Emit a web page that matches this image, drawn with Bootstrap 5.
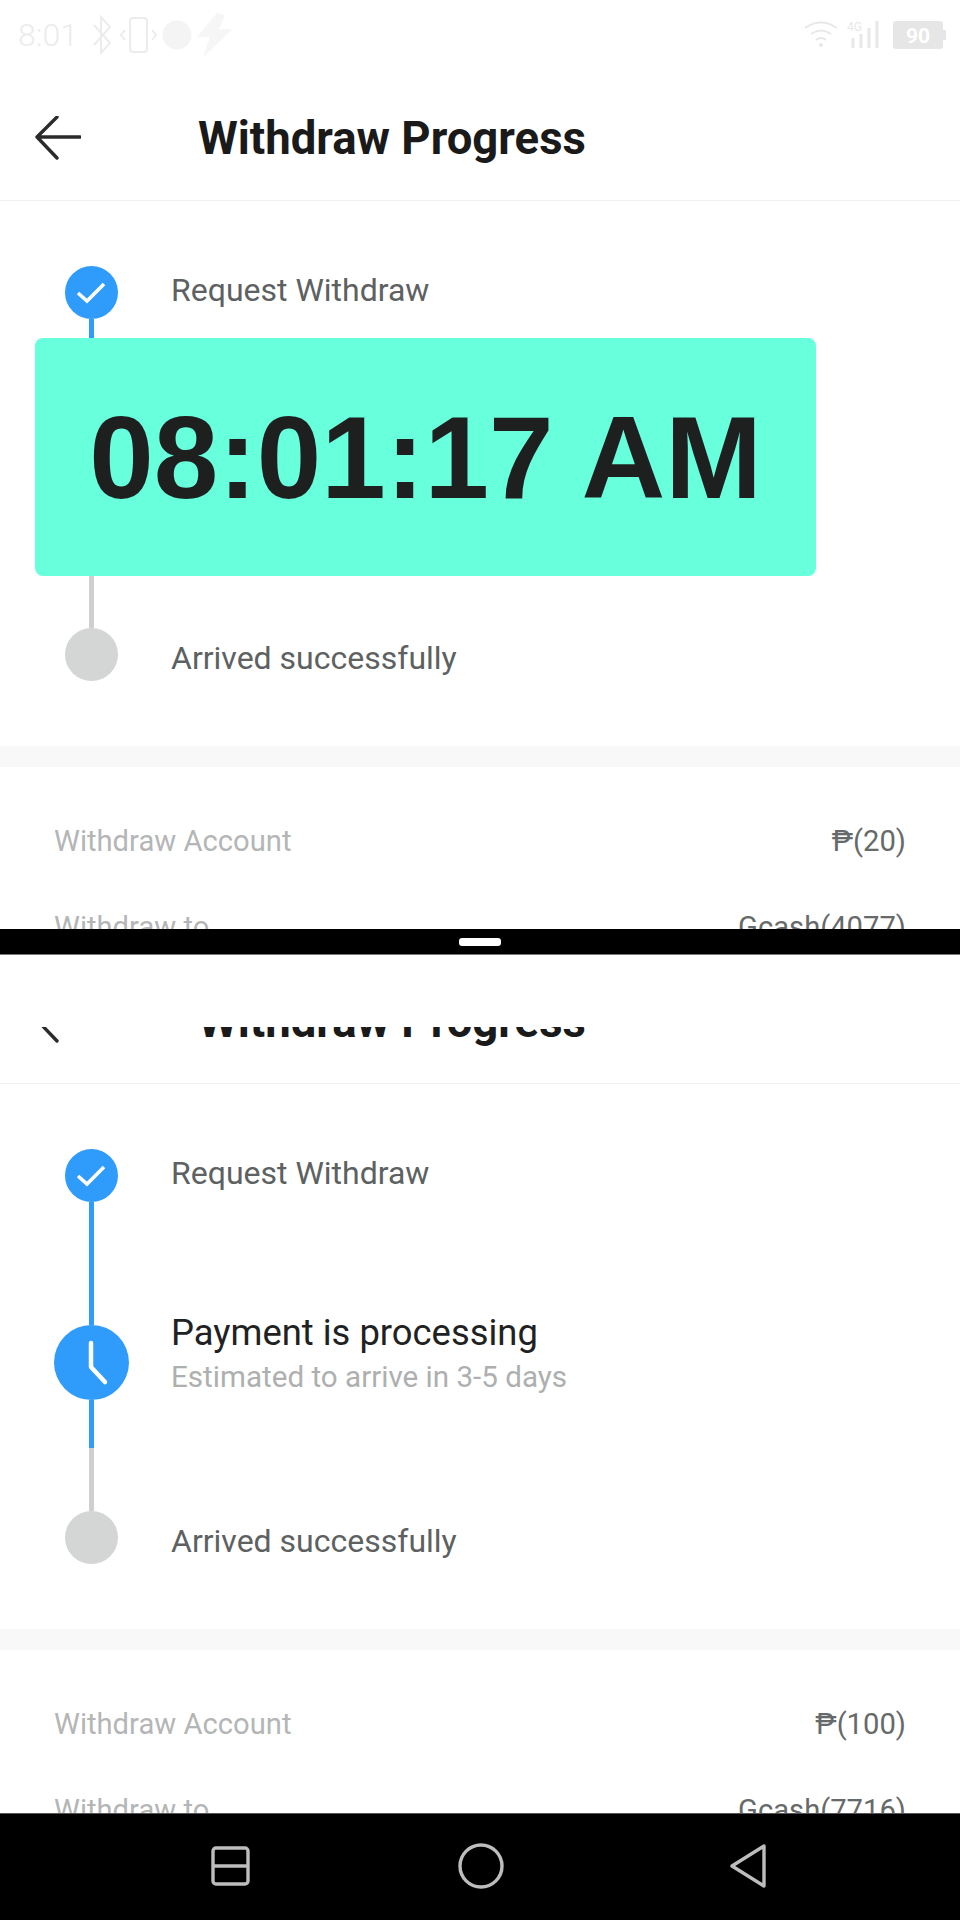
<!DOCTYPE html>
<html lang="en">
<head>
  <meta charset="UTF-8">
  <meta name="viewport" content="width=device-width, initial-scale=1.0">
  <link href="https://cdn.jsdelivr.net/npm/bootstrap@5.3.0/dist/css/bootstrap.min.css" rel="stylesheet">
  <title>Withdraw Progress</title>
  <style>
    body {
      width: 960px;
      height: 1920px;
      background-color: #000;
      font-family: Roboto, "Liberation Sans", sans-serif;
      overflow: hidden;
    }

    .pane-top { height: 929px; }
    .pane-bottom { height: 858px; }

    .status-strip {
      height: 75px;
      padding: 0 13px 5px 18px;
      color: #ececec;
    }

    .status-time {
      font-size: 32px;
      font-weight: 300;
      line-height: 1;
      margin-right: 13px;
    }

    .head-row {
      height: 126px;
      flex-shrink: 0;
      width: 100%;
      border-bottom: 1px solid #f2f2f2;
      padding-left: 35px;
    }

    .head-title {
      font-size: 45.5px;
      font-weight: 700;
      color: #1a1a1a;
      margin: 0 0 0 117px;
      padding-top: 3px;
      line-height: 1;
    }

    .head-clip {
      margin-top: 72px;
      height: 57px;
    }

    .steps { padding-top: 65px; }

    .step-row {
      display: flex;
      padding-left: 54px;
    }

    .step-axis {
      width: 74px;
      flex-shrink: 0;
      display: flex;
      flex-direction: column;
      align-items: center;
    }

    .step-dot {
      width: 53px;
      height: 53px;
      flex-shrink: 0;
    }

    .step-dot-big {
      width: 75px;
      height: 75px;
      flex-shrink: 0;
    }

    .dot-blue { background-color: #2f9bfa; }
    .dot-grey { background-color: #d4d5d5; }

    .rail {
      width: 5px;
      flex-shrink: 0;
    }

    .rail-blue { background-color: #2f9bfa; }
    .rail-grey { background-color: #cfcfcf; }
    .rail-72 { height: 19px; }
    .rail-123 { height: 123px; }
    .rail-48 { height: 48px; }
    .rail-63 { height: 63px; }
    .rail-52 { height: 52px; }

    .step-label {
      margin-left: 43px;
      font-size: 32px;
      line-height: 48px;
      color: #5d6161;
    }

    .step-label-end {
      line-height: 46px;
      align-self: flex-end;
    }

    .step-now {
      margin: -12px 0 0 43px;
      font-size: 36.4px;
      line-height: 40px;
      color: #1f2222;
    }

    .step-hint {
      font-size: 29.6px;
      line-height: 36px;
      margin-top: 6px;
      color: #aeb0b0;
    }

    .clock-box {
      margin-left: 35px;
      width: 781px;
      height: 238px;
      border-radius: 8px;
      background-color: #67ffdc;
      color: #1e2020;
      font-family: "Liberation Sans", Arial, sans-serif;
      font-size: 116px;
      font-weight: 700;
      line-height: 1;
      padding-top: 2px;
    }

    .band {
      height: 21px;
      margin-top: 65px;
      background-color: #f8f8f8;
    }

    .detail-list { padding: 32px 54px 0; }

    .detail-row {
      height: 86px;
      font-size: 29.2px;
    }

    .detail-key { color: #b4b6b6; }
    .detail-val { color: #666a6a; }

    .split-bar {
      height: 26px;
      border-bottom: 1px solid #777;
    }

    .split-grip {
      width: 42px;
      height: 8px;
      border-radius: 3px;
      background-color: #fff;
    }

    .nav-strip {
      height: 107px;
      border-top: 1px solid #555;
      padding: 0 0 2px 22px;
    }
  </style>
</head>
<body>
  <!-- Top window -->
  <div class="pane-top bg-white overflow-hidden">
    <div class="status-strip d-flex align-items-center justify-content-between">
      <div class="d-flex align-items-center">
        <span class="status-time">8:01</span>
        <svg width="144" height="44" viewBox="0 0 144 44" fill="none" stroke="#ececec" stroke-width="2">
          <path d="M3 12 L19 30 L10 40 V4 L19 14 L3 32"/>
          <rect x="39" y="5" width="17" height="34" rx="3"/>
          <path d="M34 17 L30 22 L34 27 M61 17 L65 22 L61 27"/>
          <circle cx="86" cy="22" r="14.5" fill="#f4f4f4" stroke="none"/>
          <path d="M126 0 L106 24 H119 L112 44 L142 16 H128 L134 2 Z" fill="#f6f6f6" stroke="none"/>
        </svg>
      </div>
      <svg width="142" height="30" viewBox="0 0 142 30" fill="none" stroke="#e8e8e8" stroke-width="2">
        <path d="M0 8 Q16 -3 32 8 M6 14 Q16 7 26 14 M11 20 Q16 16 21 20"/>
        <circle cx="16" cy="25" r="2" fill="#e8e8e8" stroke="none"/>
        <text x="42" y="11" font-family="Roboto, sans-serif" font-size="12" fill="#e8e8e8" stroke="none">4G</text>
        <path d="M48 18 V28 M56 14 V28 M64 8 V28 M72 1 V28" stroke-width="3"/>
        <rect x="88" y="1" width="50" height="28" rx="3" fill="#e6e6e6" stroke="none"/>
        <rect x="138" y="10" width="3" height="10" fill="#e6e6e6" stroke="none"/>
        <text x="113" y="23" text-anchor="middle" font-family="Roboto, sans-serif" font-size="21" font-weight="700" fill="#fff" stroke="none">90</text>
      </svg>
    </div>

    <div class="head-row d-flex align-items-center">
      <svg width="46" height="44" viewBox="0 0 46 44" fill="none" stroke="#2b2b2b" stroke-width="3.4" stroke-linecap="round" stroke-linejoin="round">
        <path d="M45 21 H2 M22 1 L2 21 L22 42"/>
      </svg>
      <h1 class="head-title">Withdraw Progress</h1>
    </div>

    <div class="steps">
      <div class="step-row">
        <div class="step-axis">
          <div class="step-dot dot-blue rounded-circle d-flex align-items-center justify-content-center">
            <svg width="30" height="22" viewBox="0 0 30 22" fill="none" stroke="#fff" stroke-width="3.6">
              <path d="M2 11 L11 19 L28 2"/>
            </svg>
          </div>
          <div class="rail rail-blue rail-72"></div>
        </div>
        <div class="step-label">Request Withdraw</div>
      </div>

      <div class="clock-box d-flex align-items-center justify-content-center">08:01:17 AM</div>

      <div class="step-row">
        <div class="step-axis">
          <div class="rail rail-grey rail-52"></div>
          <div class="step-dot dot-grey rounded-circle"></div>
        </div>
        <div class="step-label step-label-end">Arrived successfully</div>
      </div>
    </div>

    <div class="band"></div>

    <div class="detail-list">
      <div class="detail-row d-flex align-items-center justify-content-between">
        <span class="detail-key">Withdraw Account</span>
        <span class="detail-val">₱(20)</span>
      </div>
      <div class="detail-row d-flex align-items-center justify-content-between">
        <span class="detail-key">Withdraw to</span>
        <span class="detail-val">Gcash(4077)</span>
      </div>
    </div>
  </div>

  <!-- Split screen divider -->
  <div class="split-bar bg-black d-flex align-items-center justify-content-center">
    <div class="split-grip"></div>
  </div>

  <!-- Bottom window -->
  <div class="pane-bottom bg-white overflow-hidden">
    <div class="head-clip d-flex align-items-end overflow-hidden">
      <div class="head-row d-flex align-items-center">
        <svg width="46" height="44" viewBox="0 0 46 44" fill="none" stroke="#2b2b2b" stroke-width="3.4" stroke-linecap="round" stroke-linejoin="round">
          <path d="M45 21 H2 M22 1 L2 21 L22 42"/>
        </svg>
        <h1 class="head-title">Withdraw Progress</h1>
      </div>
    </div>

    <div class="steps">
      <div class="step-row">
        <div class="step-axis">
          <div class="step-dot dot-blue rounded-circle d-flex align-items-center justify-content-center">
            <svg width="30" height="22" viewBox="0 0 30 22" fill="none" stroke="#fff" stroke-width="3.6">
              <path d="M2 11 L11 19 L28 2"/>
            </svg>
          </div>
          <div class="rail rail-blue rail-123"></div>
        </div>
        <div class="step-label">Request Withdraw</div>
      </div>

      <div class="step-row">
        <div class="step-axis">
          <div class="step-dot-big dot-blue rounded-circle">
            <svg width="75" height="75" viewBox="0 0 75 75" fill="none" stroke="#fff" stroke-width="4.5" stroke-linecap="round" stroke-linejoin="round">
              <path d="M37 18 V42 L51 57"/>
            </svg>
          </div>
          <div class="rail rail-blue rail-48"></div>
          <div class="rail rail-grey rail-63"></div>
        </div>
        <div class="step-now">
          Payment is processing
          <div class="step-hint">Estimated to arrive in 3-5 days</div>
        </div>
      </div>

      <div class="step-row">
        <div class="step-axis">
          <div class="step-dot dot-grey rounded-circle"></div>
        </div>
        <div class="step-label step-label-end">Arrived successfully</div>
      </div>
    </div>

    <div class="band"></div>

    <div class="detail-list">
      <div class="detail-row d-flex align-items-center justify-content-between">
        <span class="detail-key">Withdraw Account</span>
        <span class="detail-val">₱(100)</span>
      </div>
      <div class="detail-row d-flex align-items-center justify-content-between">
        <span class="detail-key">Withdraw to</span>
        <span class="detail-val">Gcash(7716)</span>
      </div>
    </div>
  </div>

  <!-- Navigation bar -->
  <div class="nav-strip bg-black d-flex align-items-center">
    <div class="container-fluid d-flex align-items-center justify-content-center p-0">
      <svg width="560" height="46" viewBox="0 0 560 46" fill="none" stroke="#bdbdbd" stroke-width="3.4" stroke-linejoin="round">
        <rect x="2" y="5" width="35" height="36" rx="3"/>
        <path d="M2 23 H37"/>
        <circle cx="270" cy="23" r="21"/>
        <path d="M553 3 V43 L521 23 Z"/>
      </svg>
    </div>
  </div>

  <script src="https://cdn.jsdelivr.net/npm/bootstrap@5.3.0/dist/js/bootstrap.bundle.min.js"></script>
</body>
</html>
